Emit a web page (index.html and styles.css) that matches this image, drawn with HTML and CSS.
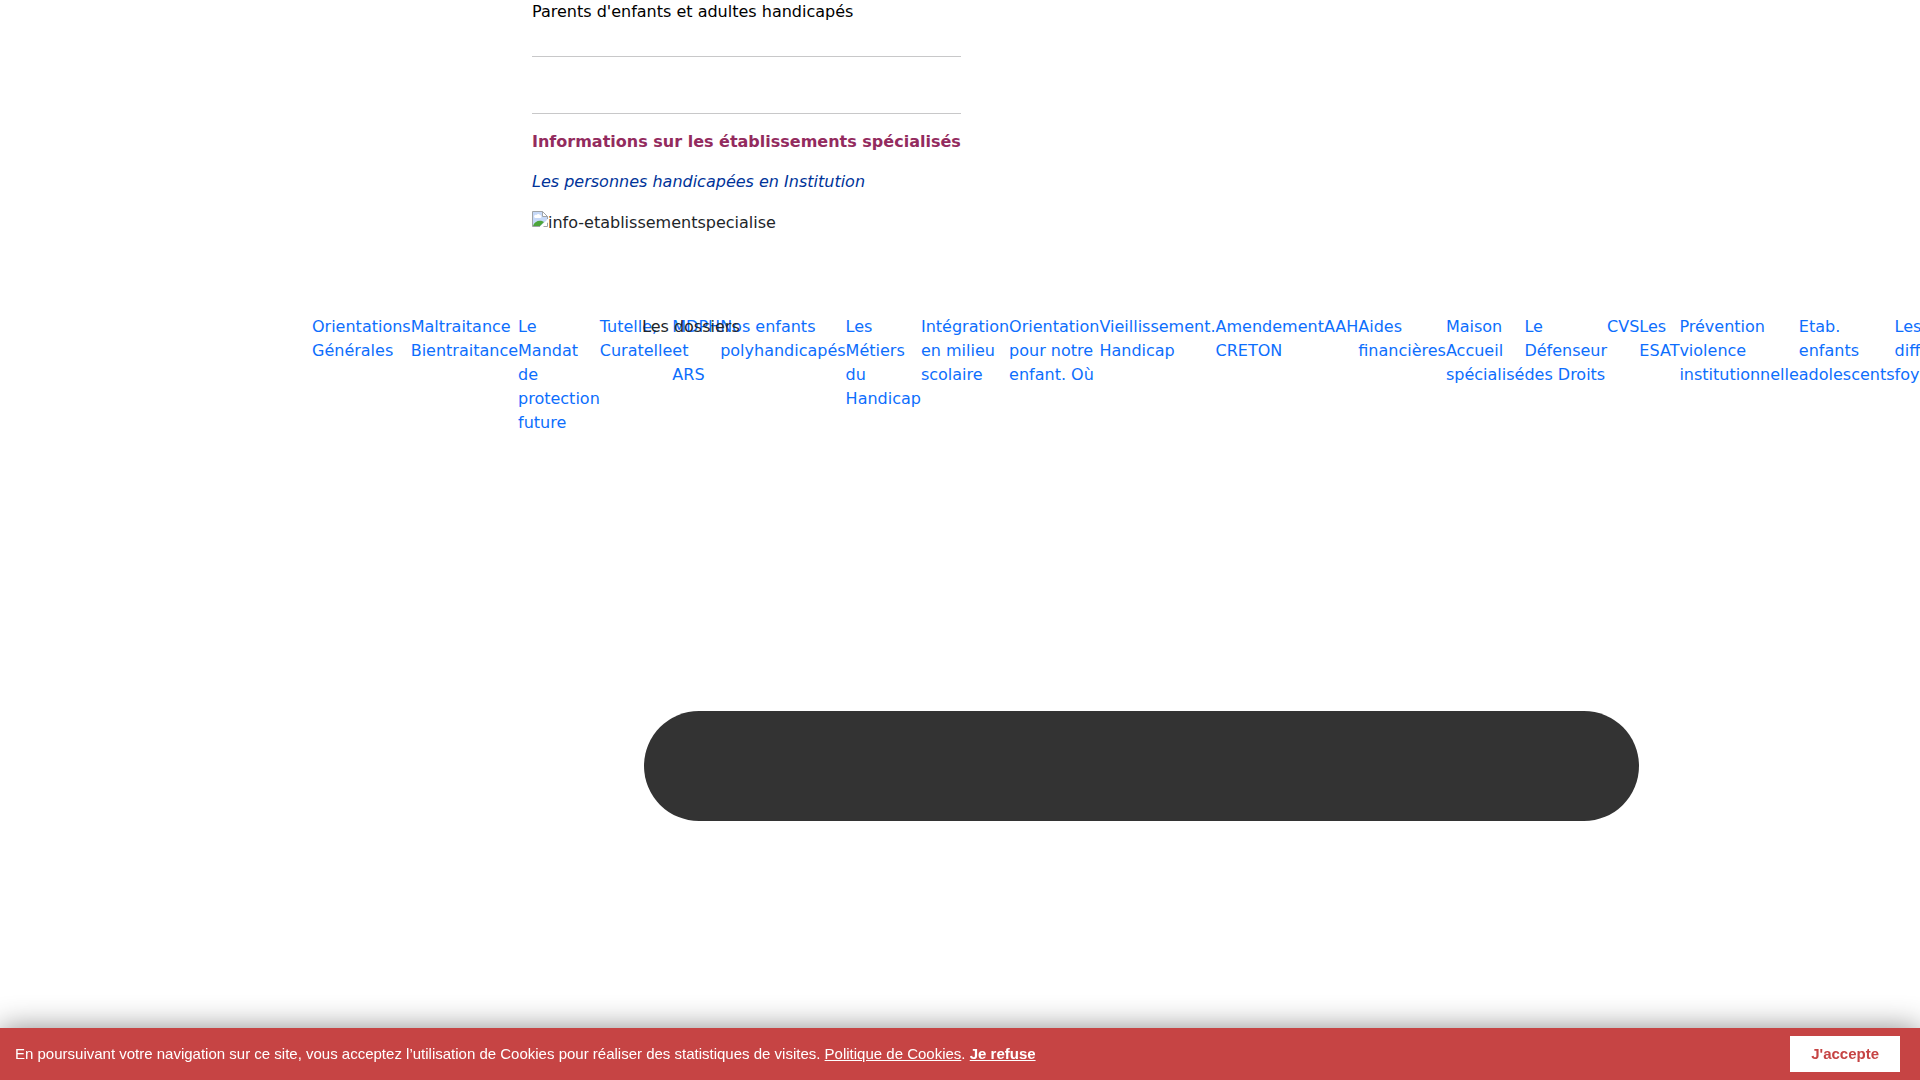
FILE: index.html
```
<!DOCTYPE html>
<html lang="fr">
<head>
    <meta charset="UTF-8">
    <title>Informations sur les établissements spécialisés</title>
    <link rel="stylesheet" href="styles.css">
</head>
<body>
    <main class="intro">
        <p class="audience">Parents d'enfants et adultes handicapés</p>
        <hr>
        <hr class="second">
        <h1>Informations sur les établissements spécialisés</h1>
        <p class="subtitle">Les personnes handicapées en Institution</p>
        <p class="picture">
            <svg width="16" height="16" viewBox="0 0 16 16" aria-hidden="true">
                <path d="M0.500 15.500V0.500H10.500L15.500 5.500V9L8 15.500Z" fill="#c6d9f8"/>
                <path d="M3 7h5a1.500 1.500 0 0 0 0-3a2 2 0 0 0-3.500 0A1.500 1.500 0 0 0 3 7Z" fill="#fff"/>
                <path d="M1 15c1-4 5-6 9-5l2 1-4 4Z" fill="#4da53b"/>
                <path d="M15.500 8V5.500L10.500 0.500H0.500V15.500H8M11 15.500H15.500V11.500" fill="none" stroke="#a0a4a8"/>
                <path d="M10.500 0.500V5.500H15.500Z" fill="#fff" stroke="#a0a4a8"/>
                <path d="M8 16L16 8V11L11 16Z" fill="#fff"/>
            </svg><span>info-etablissementspecialise</span>
        </p>
    </main>

    <nav class="dossiers">
        <ul class="dossiers-list">
            <li><a href="#">Orientations Générales</a></li>
            <li><a href="#">Maltraitance Bientraitance</a></li>
            <li><a href="#">Le Mandat de protection future</a></li>
            <li><a href="#">Tutelle, Curatelle</a></li>
            <li><a href="#">MDPH et ARS</a></li>
            <li><a href="#">Nos enfants polyhandicapés</a></li>
            <li><a href="#">Les Métiers du Handicap</a></li>
            <li><a href="#">Intégration en milieu scolaire</a></li>
            <li><a href="#">Orientation pour notre enfant. Où</a></li>
            <li><a href="#">Vieillissement. Handicap</a></li>
            <li><a href="#">Amendement CRETON</a></li>
            <li><a href="#">AAH</a></li>
            <li><a href="#">Aides financières</a></li>
            <li><a href="#">Maison Accueil spécialisé</a></li>
            <li><a href="#">Le Défenseur des Droits</a></li>
            <li><a href="#">CVS</a></li>
            <li><a href="#">Les ESAT</a></li>
            <li><a href="#">Prévention violence institutionnelle</a></li>
            <li><a href="#">Etab. enfants adolescents</a></li>
            <li><a href="#">Les différents foyers</a></li>
        </ul>
        <span class="dossiers-label">Les dossiers</span>
        <svg class="menu-bar" viewBox="0 0 995 110" aria-hidden="true">
            <rect width="995" height="110" rx="55" fill="#333"/>
        </svg>
    </nav>

    <div class="cookies">
        <p>En poursuivant votre navigation sur ce site, vous acceptez l’utilisation de Cookies pour réaliser des statistiques de visites. <a href="#">Politique de Cookies</a>. <a href="#" class="refuse">Je refuse</a></p>
        <button type="button">J'accepte</button>
    </div>
</body>
</html>
```
FILE: styles.css
```
body {
    margin: 0;
    font-family: "DejaVu Sans", sans-serif;
    font-size: 16px;
    line-height: 24px;
    color: #212529;
    background-color: #fff;
    overflow-x: hidden;
}
p, h1, ul {
    margin: 0;
    padding: 0;
}

/* Intro column */
.intro {
    width: fit-content;
    margin-left: 532px;
}
.intro hr {
    margin: 32px 0 0;
    border: 0;
    border-top: 1px solid #c8c8c9;
}
.intro hr.second {
    margin: 56px 0 16px;
}
.audience {
    color: #000;
}
.intro h1 {
    font-size: 16px;
    font-weight: bold;
    color: #932b5e;
}
.subtitle {
    margin: 16px 0;
    font-style: italic;
    color: #039;
}
.picture {
    display: flex;
    align-items: flex-start;
    padding-top: 1px;
}

/* Menu */
.dossiers {
    position: relative;
    margin-top: 80px;
}
.dossiers-list {
    display: flex;
    margin: 0 0 276px 312px;
    list-style: none;
}
.dossiers-list a {
    color: #0d6efd;
    text-decoration: none;
}
.dossiers-label {
    position: absolute;
    top: 0;
    left: 642px;
}
.menu-bar {
    display: block;
    width: calc(100% - 925px);
    margin-left: 644px;
}

/* Cookie banner */
.cookies {
    position: fixed;
    left: 0;
    right: 0;
    bottom: 0;
    display: flex;
    align-items: center;
    justify-content: space-between;
    padding: 8px 20px 8px 15px;
    font-family: "Liberation Sans", Arial, sans-serif;
    font-size: 15px;
    line-height: 20px;
    color: #fff;
    background-color: #c64444;
    box-shadow: 0 0 30px rgba(0, 0, 0, 0.45);
}
.cookies a {
    color: #fff;
}
.cookies .refuse {
    font-weight: bold;
}
.cookies button {
    padding: 8px 21px;
    border: none;
    font: bold 15px/20px "Liberation Sans", Arial, sans-serif;
    color: #c64444;
    background-color: #fff;
    cursor: pointer;
}
```
